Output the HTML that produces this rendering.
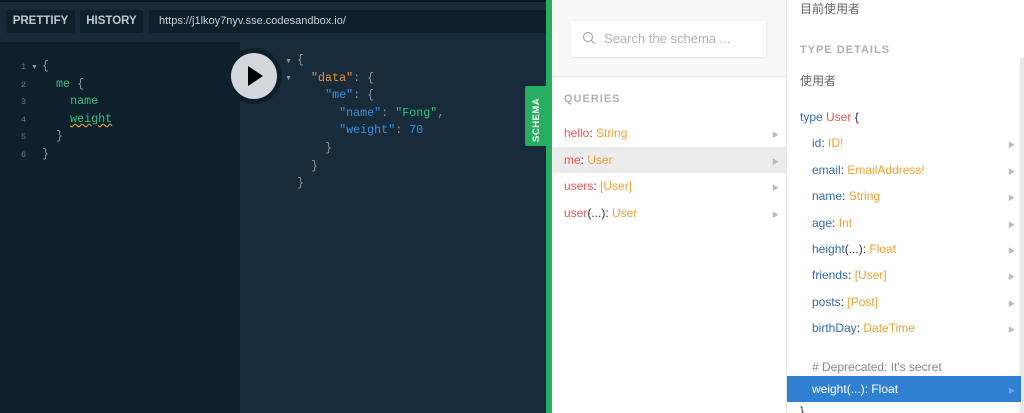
<!DOCTYPE html>
<html><head><meta charset="utf-8"><style>
*{margin:0;padding:0;box-sizing:border-box}
html,body{width:1024px;height:413px;overflow:hidden}
body{position:relative;background:#172a3a;font-family:"Liberation Sans","Noto Sans CJK TC",sans-serif}
.abs{position:absolute}
.mono{font-family:"Liberation Mono",monospace;font-size:11.7px;line-height:17.6px;white-space:pre}
.btn{top:10px;height:23px;background:#0f202d;color:#c0c6cc;font-weight:bold;font-size:11.5px;line-height:23px;text-align:center;border-radius:2px}
.ln{color:#6b7a86;font-size:8.5px;font-family:"Liberation Mono",monospace;left:21px}
.q{left:564px;font-size:12px;height:26px;line-height:26px}
.t{left:812px;font-size:12px;line-height:26px}
.r{color:#ef5350}.o{color:#f0a030}.b{color:#2f6aa8}.k{color:#333}
.arr{position:absolute;font-size:7px;color:#bbb}
.tri{position:absolute;font-size:7px;color:#8a97a1}
</style></head><body>
<div class="abs" style="left:0;top:0;width:548px;height:2px;background:#0a141c"></div>
<div class="abs btn" style="left:6px;width:69px">PRETTIFY</div>
<div class="abs btn" style="left:80px;width:63px">HISTORY</div>
<div class="abs" style="left:149px;top:10px;width:400px;height:23px;background:#0f202d;border-radius:2px;color:#c8ced4;font-size:11px;line-height:23px;padding-left:10px">https://j1lkoy7nyv.sse.codesandbox.io/</div>
<div class="abs" style="left:0;top:42px;width:240px;height:371px;background:#0f202d"></div>
<div class="abs" style="left:240px;top:42px;width:306px;height:371px;background:#172b3a"></div>
<div class="abs ln" style="top:62px">1</div><div class="abs ln" style="top:80px">2</div><div class="abs ln" style="top:97px">3</div><div class="abs ln" style="top:115px">4</div><div class="abs ln" style="top:132px">5</div><div class="abs ln" style="top:150px">6</div>
<span class="tri" style="left:31px;top:64px">▼</span>
<div class="abs mono" style="left:42px;top:58px;color:#8a97a1">{
  <span style="color:#2ec27e">me</span> {
    <span style="color:#2ec27e">name</span>
    <span style="color:#2ec27e;text-decoration:underline wavy #c9a227">weight</span>
  }
}</div>
<div class="abs" style="left:226px;top:48px;width:56px;height:56px;border-radius:50%;background:#0f202d"></div>
<div class="abs" style="left:231px;top:53px;width:46px;height:46px;border-radius:50%;background:#d4d7db"></div>
<svg class="abs" style="left:246px;top:65px" width="20" height="22"><path d="M2 1L17 11L2 21Z" fill="#000"/></svg>
<span class="tri" style="left:285px;top:58px">▼</span>
<span class="tri" style="left:285px;top:75px">▼</span>
<div class="abs mono" style="left:297px;top:52px;color:#8a97a1">{
  <span style="color:#e8913a">"data"</span>: {
    <span style="color:#3b8fdf">"me"</span>: {
      <span style="color:#3b8fdf">"name"</span>: <span style="color:#2ec27e">"Fong"</span>,
      <span style="color:#3b8fdf">"weight"</span>: <span style="color:#3b8fdf">70</span>
    }
  }
}</div>
<div class="abs" style="left:546px;top:0;width:6px;height:413px;background:#27ae60"></div>
<div class="abs" style="left:525px;top:86px;width:25px;height:60px;background:#27ae60;border-radius:2px 0 0 2px"></div>
<div class="abs" style="left:531px;top:142px;transform:rotate(-90deg);transform-origin:0 0;color:#fff;font-weight:bold;font-size:9.5px;letter-spacing:.5px">SCHEMA</div>
<div class="abs" style="left:552px;top:0;width:234px;height:413px;background:#fff"></div>
<div class="abs" style="left:552px;top:0;width:234px;height:77px;background:#f7f7f7;border-bottom:1px solid #e4e4e4"></div>
<div class="abs" style="left:571px;top:21px;width:195px;height:36px;background:#fff;box-shadow:0 1px 2px rgba(0,0,0,.08)"></div>
<svg class="abs" style="left:582px;top:31px" width="14" height="14"><circle cx="6" cy="6" r="4.5" fill="none" stroke="#aaa" stroke-width="1.2"/><path d="M9.3 9.3L13 13" stroke="#aaa" stroke-width="1.2"/></svg>
<div class="abs" style="left:604px;top:31px;font-size:13px;color:#b3b3b3">Search the schema ...</div>
<div class="abs" style="left:564px;top:93px;font-size:11px;font-weight:bold;color:#b0b0b0;letter-spacing:1px">QUERIES</div>
<div class="abs" style="left:552px;top:147px;width:234px;height:26px;background:#ececec"></div>
<div class="abs q" style="top:120px"><span class="r">hello</span><span class="k">: </span><span class="o">String</span></div>
<div class="abs q" style="top:147px"><span class="r">me</span><span class="k">: </span><span class="o">User</span></div>
<div class="abs q" style="top:173px"><span class="r">users</span><span class="k">: </span><span class="o">[User]</span></div>
<div class="abs q" style="top:200px"><span class="r">user</span><span class="k">(...)</span><span class="k">: </span><span class="o">User</span></div>
<span class="arr" style="left:772px;top:130px">▶</span><span class="arr" style="left:772px;top:157px">▶</span><span class="arr" style="left:772px;top:183px">▶</span><span class="arr" style="left:772px;top:210px">▶</span>
<div class="abs" style="left:786px;top:0;width:238px;height:413px;background:#fff;border-left:1px solid #e6e6e6"></div>
<div class="abs" style="left:1020px;top:58px;width:4px;height:355px;background:#e8e8e8"></div>
<div class="abs" style="left:800px;top:0;font-size:12px;color:#666">目前使用者</div>
<div class="abs" style="left:800px;top:44px;font-size:11px;font-weight:bold;color:#b0b0b0;letter-spacing:1px">TYPE DETAILS</div>
<div class="abs" style="left:800px;top:72px;font-size:12px;color:#666">使用者</div>
<div class="abs" style="left:800px;top:104px;font-size:12px;line-height:26px"><span class="b">type </span><span class="r">User</span><span class="k"> {</span></div>
<div class="abs t" style="top:130px"><span class="b">id</span><span class="k">: </span><span class="o">ID!</span></div>
<div class="abs t" style="top:157px"><span class="b">email</span><span class="k">: </span><span class="o">EmailAddress!</span></div>
<div class="abs t" style="top:183px"><span class="b">name</span><span class="k">: </span><span class="o">String</span></div>
<div class="abs t" style="top:210px"><span class="b">age</span><span class="k">: </span><span class="o">Int</span></div>
<div class="abs t" style="top:236px"><span class="b">height</span><span class="k">(...): </span><span class="o">Float</span></div>
<div class="abs t" style="top:262px"><span class="b">friends</span><span class="k">: </span><span class="o">[User]</span></div>
<div class="abs t" style="top:289px"><span class="b">posts</span><span class="k">: </span><span class="o">[Post]</span></div>
<div class="abs t" style="top:315px"><span class="b">birthDay</span><span class="k">: </span><span class="o">DateTime</span></div>
<div class="abs" style="left:812px;top:360px;font-size:12px;color:#888">#&nbsp;Deprecated: It's secret</div>
<div class="abs" style="left:787px;top:376px;width:234px;height:26px;background:#2f80d1"></div>
<div class="abs t" style="top:376px;color:#fff">weight(...): Float</div>
<span class="arr" style="left:1008px;top:140px">▶</span><span class="arr" style="left:1008px;top:167px">▶</span><span class="arr" style="left:1008px;top:193px">▶</span><span class="arr" style="left:1008px;top:220px">▶</span><span class="arr" style="left:1008px;top:246px">▶</span><span class="arr" style="left:1008px;top:272px">▶</span><span class="arr" style="left:1008px;top:299px">▶</span><span class="arr" style="left:1008px;top:325px">▶</span><span class="arr" style="left:1008px;top:386px;color:#6aa3de">▶</span>
<div class="abs" style="left:800px;top:404px;font-size:12px;color:#333">}</div>
</body></html>
